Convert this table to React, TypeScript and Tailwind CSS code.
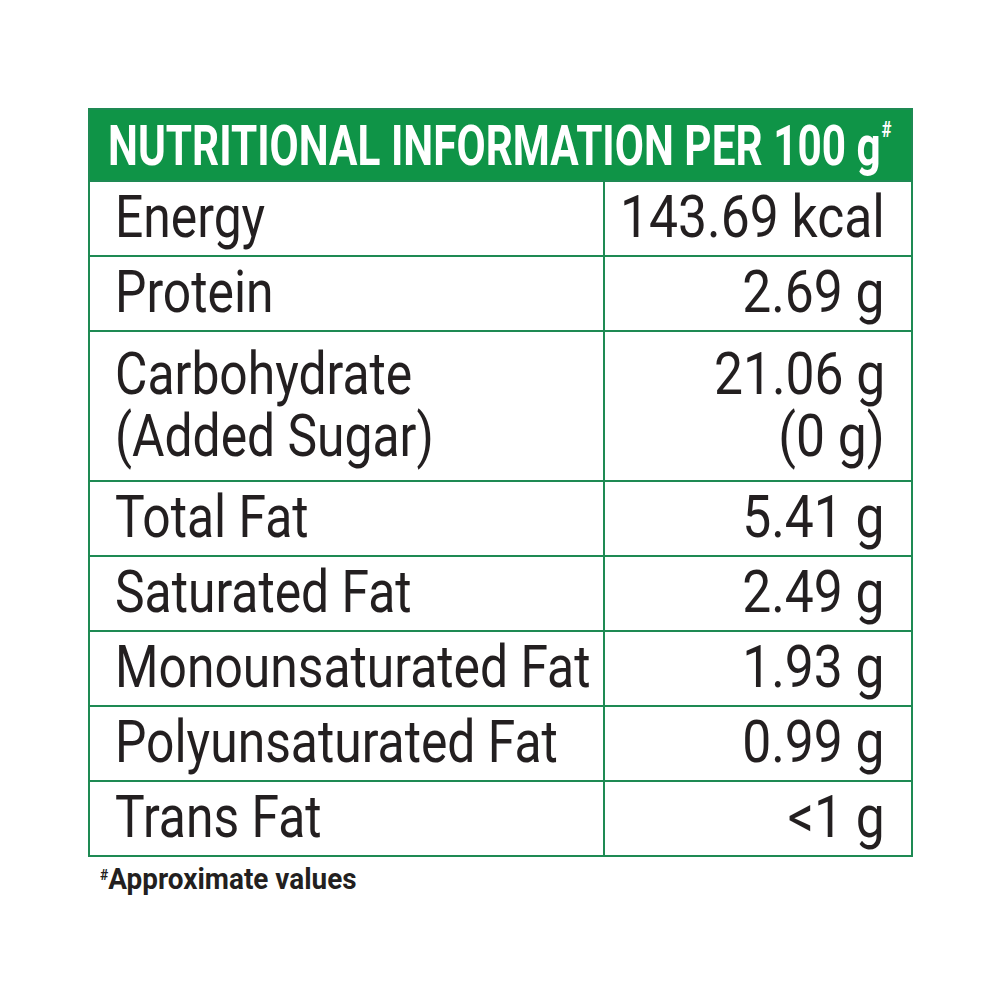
import React from "react";

const rows: { label: string[]; value: string[]; tall?: boolean }[] = [
  { label: ["Energy"], value: ["143.69 kcal"] },
  { label: ["Protein"], value: ["2.69 g"] },
  { label: ["Carbohydrate", "(Added Sugar)"], value: ["21.06 g", "(0 g)"], tall: true },
  { label: ["Total Fat"], value: ["5.41 g"] },
  { label: ["Saturated Fat"], value: ["2.49 g"] },
  { label: ["Monounsaturated Fat"], value: ["1.93 g"] },
  { label: ["Polyunsaturated Fat"], value: ["0.99 g"] },
  { label: ["Trans Fat"], value: ["<1 g"] },
];

const font = { fontFamily: '"Roboto", "Liberation Sans", sans-serif' };

export default function App() {
  return (
    <div className="w-[1000px] h-[1000px] bg-white pt-[108px] pl-[88px]" style={font}>
      <div className="w-[825px] border-2 border-[#1e8a53]">
        <div className="h-[70px] bg-[#0f9447] flex items-center pl-[18px] pt-[3px] text-white font-bold text-[55px] leading-none overflow-hidden">
          <div className="whitespace-nowrap origin-left scale-x-[0.77] flex items-start shrink-0">
            <span>NUTRITIONAL INFORMATION PER 100 g</span>
            <span className="text-[22px] mt-[0px] ml-[1px] font-bold">#</span>
          </div>
        </div>
        {rows.map((r, i) => (
          <div
            key={i}
            className={`grid grid-cols-[515px_1fr] border-t-2 border-[#1e8a53] text-[#231f20] text-[60px] font-normal ${r.tall ? "h-[150px]" : "h-[75px]"}`}
          >
            <div className="border-r-2 border-[#1e8a53] flex flex-col justify-center pl-[25px] leading-[62px] pb-[3px] min-w-0">
              {r.label.map((l) => (
                <div key={l} className="flex justify-start">
                  <div className="shrink-0 whitespace-nowrap origin-left scale-x-[0.83]">{l}</div>
                </div>
              ))}
            </div>
            <div className="flex flex-col justify-center pr-[26px] leading-[62px] pb-[3px] min-w-0">
              {r.value.map((v) => (
                <div key={v} className="flex justify-end">
                  <div className="shrink-0 whitespace-nowrap origin-right scale-x-[0.86]">{v}</div>
                </div>
              ))}
            </div>
          </div>
        ))}
      </div>
      <div className="flex items-start font-bold text-[#231f20] mt-[5px] ml-[12px] w-max whitespace-nowrap origin-left scale-x-[0.93]">
        <span className="text-[15px] mt-[2px]">#</span>
        <span className="text-[30px] leading-[34px]">Approximate values</span>
      </div>
    </div>
  );
}
